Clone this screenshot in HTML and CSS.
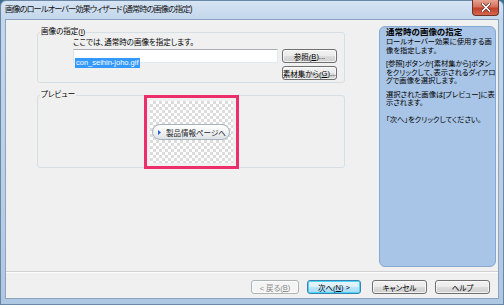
FILE: index.html
```html
<!DOCTYPE html>
<html lang="ja">
<head>
    <meta charset="UTF-8">
    <title>画像のロールオーバー効果ウィザード</title>
    <link rel="stylesheet" href="styles.css">
</head>
<body>
    <div class="window">
        <div class="titlebar">
            <span class="title">画像のロールオーバー効果ウィザード (通常時の画像の指定)</span>
            <span class="close">
                <svg width="10" height="9" viewBox="0 0 10 9">
                    <path d="M1.5 1 L8.5 8 M8.5 1 L1.5 8" stroke="#5a2a22" stroke-width="3" stroke-linecap="square"/>
                    <path d="M1.5 1 L8.5 8 M8.5 1 L1.5 8" stroke="#ffffff" stroke-width="1.6" stroke-linecap="square"/>
                </svg>
            </span>
        </div>
        <div class="client">
            <div class="main">
                <div class="left">
                    <fieldset class="group">
                        <legend>画像の指定(<u>I</u>)</legend>
                        <div class="group-file">
                            <p class="hint">ここでは、通常時の画像を指定します。</p>
                            <div class="file-row">
                                <div class="textbox"><span class="sel">con_seihin-joho.gif</span></div>
                                <div class="side-buttons">
                                    <span class="btn">参照(<u>B</u>)...</span>
                                    <span class="btn">素材集から(<u>G</u>)...</span>
                                </div>
                            </div>
                        </div>
                    </fieldset>
                    <fieldset class="group group-preview">
                        <legend>プレビュー</legend>
                        <div class="preview">
                            <span class="pill">
                                <svg width="3" height="5" viewBox="0 0 3 5"><path d="M0 0 L3 2.5 L0 5 Z" fill="#2a62c9"/></svg>
                                製品情報ページへ
                            </span>
                        </div>
                    </fieldset>
                </div>
                <div class="help">
                    <p class="help-title">通常時の画像の指定</p>
                    <p>ロールオーバー効果に使用する画<br>像を指定します。</p>
                    <p>[参照]ボタンか[素材集から]ボタン<br>をクリックして、表示されるダイアロ<br>グで画像を選択します。</p>
                    <p>選択された画像は[プレビュー]に表<br>示されます。</p>
                    <p class="help-last">「次へ」をクリックしてください。</p>
                </div>
            </div>
            <div class="separator"></div>
            <div class="buttons">
                <span class="btn back disabled">&lt; 戻る(<u>B</u>)</span>
                <span class="btn next default">次へ(<u>N</u>) &gt;</span>
                <span class="btn cancel">キャンセル</span>
                <span class="btn help-btn">ヘルプ</span>
            </div>
        </div>
    </div>
</body>
</html>
```

FILE: styles.css
```css
html, body {
    margin: 0;
    padding: 0;
    background-color: #3b6f8e;
    font-family: "Liberation Sans", "Noto Sans CJK JP", sans-serif;
    font-feature-settings: "palt";
    color: #000;
}
.window {
    box-sizing: border-box;
    width: 504px;
    height: 305px;
    padding: 0 4px 5px 4px;
    display: flex;
    flex-direction: column;
    border: 1px solid #6a87a8;
    border-radius: 6px 6px 0 0;
    background: linear-gradient(to bottom, #d6e4f3 0, #c3d7ec 18px, #b9cfe7 60%, #aec7e3 100%);
}
.titlebar {
    height: 18px;
    display: flex;
    justify-content: space-between;
    align-items: flex-start;
}
.title {
    font-size: 8.2px;
    line-height: 17px;
    letter-spacing: -0.9px;
    color: #111;
    white-space: nowrap;
}
.close {
    width: 27px;
    height: 16px;
    margin-top: -1px;
    display: flex;
    align-items: center;
    justify-content: center;
    box-sizing: border-box;
    border: 1px solid #6d3228;
    border-top: none;
    border-radius: 0 0 4px 4px;
    background: linear-gradient(to bottom, #e8a493 0, #d5705c 45%, #c2412b 55%, #d5684f 100%);
}
.client {
    flex: 1;
    display: flex;
    flex-direction: column;
    background-color: #f0f0f0;
    border: 1px solid #8fa5bf;
}
.main {
    flex: 1;
    display: flex;
}
.left {
    width: 372px;
    padding: 7px 0 0 31px;
    box-sizing: border-box;
}
.group {
    width: 308px;
    box-sizing: border-box;
    margin: 0;
    padding: 0;
    border: 1px solid #d5dfe5;
    border-radius: 3px;
    min-inline-size: 0;
}
.group legend {
    font-size: 7.5px;
    line-height: 10px;
    padding: 0 1px;
    margin-left: 2px;
}
.group-file {
    padding: 0 7px 2px 35px;
}
.hint {
    margin: 1px 0 1px 0;
    font-size: 7.5px;
    line-height: 10px;
    white-space: nowrap;
}
.file-row {
    display: flex;
    gap: 4px;
}
.textbox {
    width: 205px;
    height: 14px;
    box-sizing: border-box;
    background-color: #fff;
    border: 1px solid #abadb3;
    border-color: #abadb3 #e3e9ef #e3e9ef #e2e3ea;
    padding: 1px 0 0 1px;
}
.sel {
    display: inline-block;
    background-color: #3399ff;
    color: #fff;
    font-size: 7.5px;
    line-height: 10px;
    padding: 0 1px;
}
.side-buttons {
    display: flex;
    flex-direction: column;
    gap: 3px;
}
.btn {
    width: 55px;
    height: 14px;
    box-sizing: border-box;
    display: flex;
    align-items: center;
    justify-content: center;
    font-size: 7.5px;
    white-space: nowrap;
    border: 1px solid #707070;
    border-radius: 3px;
    background: linear-gradient(to bottom, #f2f2f2 0, #ebebeb 50%, #dddddd 50%, #cfcfcf 100%);
    box-shadow: inset 0 0 0 1px rgba(255, 255, 255, 0.7);
}
.group-preview {
    margin-top: 7px;
    padding: 1px 0 4px 0;
}
.preview {
    width: 83px;
    height: 62px;
    margin: 0 auto;
    display: flex;
    align-items: center;
    justify-content: center;
    background-color: #fff;
    background-image: conic-gradient(#dcdcdc 25%, #ffffff 0 50%, #dcdcdc 0 75%, #ffffff 0);
    background-size: 6px 6px;
    outline: 3px solid #ec2f6b;
    outline-offset: 3px;
}
.pill {
    width: 78px;
    height: 16px;
    box-sizing: border-box;
    display: flex;
    align-items: center;
    gap: 5px;
    padding-left: 5px;
    font-size: 7.5px;
    color: #222;
    white-space: nowrap;
    border: 1px solid #a9b2bb;
    border-radius: 8px;
    background: linear-gradient(to bottom, #ffffff 0, #f1f3f5 50%, #dde2e7 100%);
}
.help {
    width: 117px;
    box-sizing: border-box;
    margin: 6px 0 4px 1px;
    padding: 0 2px 0 6px;
    background-color: #a8c4e6;
    border: 1px solid #86a8d1;
    border-radius: 6px;
    font-size: 7.3px;
    line-height: 8.5px;
    white-space: nowrap;
}
.help p {
    margin: 0 0 5px 0;
}
.help .help-title {
    font-weight: bold;
    font-size: 8.5px;
    line-height: 11px;
    margin: 0;
}
.help .help-last {
    margin-top: 8px;
}
.separator {
    height: 1px;
    background-color: #d0d0d0;
    border-bottom: 1px solid #fcfcfc;
}
.buttons {
    height: 25px;
    display: flex;
    align-items: flex-start;
    justify-content: flex-end;
    padding: 7px 8px 0 0;
    box-sizing: border-box;
}
.btn.back {
    width: 48px;
}
.btn.next {
    width: 54px;
    margin-left: 8px;
}
.btn.cancel {
    margin-left: 11px;
}
.btn.help-btn {
    margin-left: 8px;
}
.btn.disabled {
    color: #8a8a8a;
    border-color: #adb2b5;
    background: #f4f4f4;
}
.btn.default {
    border-color: #3c7fb1;
    background: linear-gradient(to bottom, #eaf6fd 0, #d9f0fc 50%, #bee6fd 50%, #a7d9f5 100%);
    box-shadow: inset 0 0 0 1px #48d8fb;
}
```
